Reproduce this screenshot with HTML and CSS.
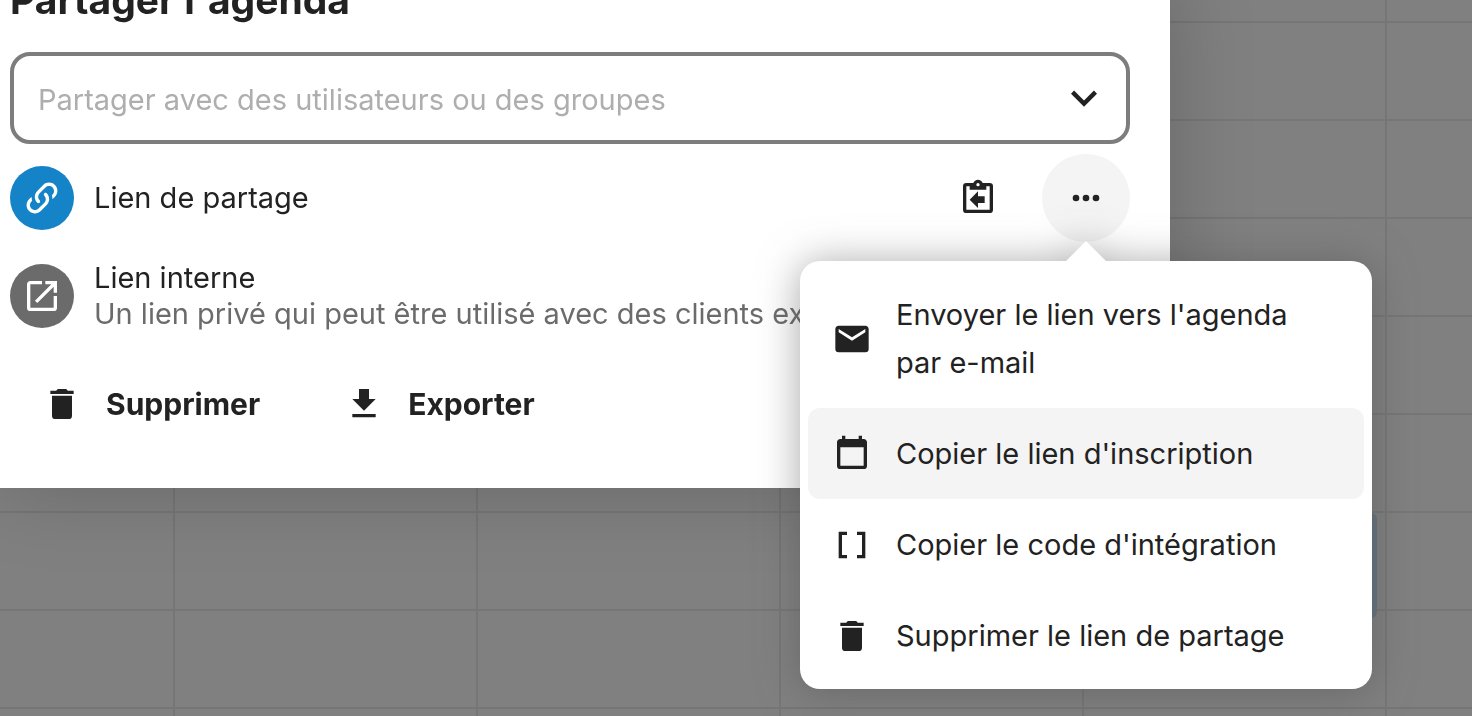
FILE: index.html
```html
<!DOCTYPE html>
<html lang="fr">
<head>
    <meta charset="UTF-8">
    <meta name="viewport" content="width=device-width, initial-scale=1.0">
    <title>Partager l'agenda</title>
    <link rel="stylesheet" href="styles.css">
</head>
<body>
    <div class="calendar">
        <div class="event"></div>
    </div>

    <main class="modal">
        <h2 class="modal-title">Partager l'agenda</h2>

        <div class="share-search">
            <input type="text" class="share-input" placeholder="Partager avec des utilisateurs ou des groupes" aria-label="Partager avec des utilisateurs ou des groupes">
            <button type="button" class="search-toggle" aria-label="Ouvrir la liste">
                <svg class="icon-large" viewBox="0 0 24 24"><path d="M7.41,8.58L12,13.17L16.59,8.58L18,10L12,16L6,10L7.41,8.58Z"/></svg>
            </button>
        </div>

        <ul class="share-list">
            <li class="share-row">
                <span class="avatar avatar-public">
                    <svg class="icon" viewBox="0 0 24 24"><path d="M10.59,13.41C11,13.8 11,14.44 10.59,14.83C10.2,15.22 9.56,15.22 9.17,14.83C7.22,12.88 7.22,9.71 9.17,7.76V7.76L12.71,4.22C14.66,2.27 17.83,2.27 19.78,4.22C21.73,6.17 21.73,9.34 19.78,11.29L18.29,12.78C18.3,11.96 18.17,11.14 17.89,10.36L18.36,9.88C19.54,8.71 19.54,6.81 18.36,5.64C17.19,4.46 15.29,4.46 14.12,5.64L10.59,9.17C9.41,10.34 9.41,12.24 10.59,13.41M13.41,9.17C13.8,8.78 14.44,8.78 14.83,9.17C16.78,11.12 16.78,14.29 14.83,16.24V16.24L11.29,19.78C9.34,21.73 6.17,21.73 4.22,19.78C2.27,17.83 2.27,14.66 4.22,12.71L5.71,11.22C5.7,12.04 5.83,12.86 6.11,13.65L5.64,14.12C4.46,15.29 4.46,17.19 5.64,18.36C6.81,19.54 8.71,19.54 9.88,18.36L13.41,14.83C14.59,13.66 14.59,11.76 13.41,10.59C13,10.2 13,9.56 13.41,9.17Z"/></svg>
                </span>
                <p class="share-label">Lien de partage</p>
                <button type="button" class="round-button" aria-label="Copier le lien">
                    <svg class="icon" viewBox="0 0 24 24"><path fill-rule="evenodd" d="M19,3H14.82C14.4,1.84 13.3,1 12,1C10.7,1 9.6,1.84 9.18,3H5A2,2 0 0,0 3,5V19A2,2 0 0,0 5,21H19A2,2 0 0,0 21,19V5A2,2 0 0,0 19,3M12,3A1,1 0 0,1 13,4A1,1 0 0,1 12,5A1,1 0 0,1 11,4A1,1 0 0,1 12,3M7,7H17V5H19V19H5V5H7V7M12,8L7,13L12,18V15H16V11H12V8Z"/></svg>
                </button>
                <div class="actions">
                    <button type="button" class="round-button open" aria-label="Actions" aria-expanded="true">
                        <svg class="icon" viewBox="0 0 24 24"><path d="M16,12A2,2 0 0,1 18,10A2,2 0 0,1 20,12A2,2 0 0,1 18,14A2,2 0 0,1 16,12M10,12A2,2 0 0,1 12,10A2,2 0 0,1 14,12A2,2 0 0,1 12,14A2,2 0 0,1 10,12M4,12A2,2 0 0,1 6,10A2,2 0 0,1 8,12A2,2 0 0,1 6,14A2,2 0 0,1 4,12Z"/></svg>
                    </button>

                    <div class="menu">
                        <button type="button" class="menu-item">
                            <svg class="icon" viewBox="0 0 24 24"><path d="M20,8L12,13L4,8V6L12,11L20,6M20,4H4C2.89,4 2,4.89 2,6V18A2,2 0 0,0 4,20H20A2,2 0 0,0 22,18V6C22,4.89 21.1,4 20,4Z"/></svg>
                            <span>Envoyer le lien vers l'agenda par e-mail</span>
                        </button>
                        <button type="button" class="menu-item active">
                            <svg class="icon" viewBox="0 0 24 24"><path d="M19,19H5V8H19M16,1V3H8V1H6V3H5C3.89,3 3,3.89 3,5V19A2,2 0 0,0 5,21H19A2,2 0 0,0 21,19V5C21,3.89 20.1,3 19,3H18V1"/></svg>
                            <span>Copier le lien d'inscription</span>
                        </button>
                        <button type="button" class="menu-item">
                            <svg class="icon" viewBox="0 0 24 24"><path d="M15,4V6H18V18H15V20H20V4M4,4V20H9V18H6V6H9V4H4Z"/></svg>
                            <span>Copier le code d'intégration</span>
                        </button>
                        <button type="button" class="menu-item">
                            <svg class="icon" viewBox="0 0 24 24"><path d="M19,4H15.5L14.5,3H9.5L8.5,4H5V6H19M6,19A2,2 0 0,0 8,21H16A2,2 0 0,0 18,19V7H6V19Z"/></svg>
                            <span>Supprimer le lien de partage</span>
                        </button>
                    </div>
                </div>
            </li>
            <li class="share-row">
                <span class="avatar avatar-internal">
                    <svg class="icon" viewBox="0 0 24 24"><path d="M14,3V5H17.59L7.76,14.83L9.17,16.24L19,6.41V10H21V3M19,19H5V5H12V3H5C3.89,3 3,3.9 3,5V19A2,2 0 0,0 5,21H19A2,2 0 0,0 21,19V12H19V19Z"/></svg>
                </span>
                <p class="share-label">
                    Lien interne
                    <span class="share-detail">Un lien privé qui peut être utilisé avec des clients externes</span>
                </p>
            </li>
        </ul>

        <div class="modal-buttons">
            <button type="button" class="text-button">
                <svg class="icon" viewBox="0 0 24 24"><path d="M19,4H15.5L14.5,3H9.5L8.5,4H5V6H19M6,19A2,2 0 0,0 8,21H16A2,2 0 0,0 18,19V7H6V19Z"/></svg>
                <span>Supprimer</span>
            </button>
            <button type="button" class="text-button">
                <svg class="icon" viewBox="0 0 24 24"><path d="M5,20H19V18H5M19,9H15V3H9V9H5L12,16L19,9Z"/></svg>
                <span>Exporter</span>
            </button>
        </div>
    </main>
</body>
</html>
```
FILE: styles.css
```css
body {
    font-family: Inter, "Liberation Sans", sans-serif;
    font-size: 29px;
    line-height: 36px;
    color: #222;
    margin: 0;
    min-height: 100vh;
    overflow: hidden;
}

button,
input {
    font: inherit;
    color: inherit;
    border: none;
    background: none;
    padding: 0;
    margin: 0;
}

button {
    cursor: pointer;
}

.icon,
.icon-large {
    display: block;
    flex-shrink: 0;
    width: 40px;
    height: 40px;
    fill: currentColor;
}

.icon-large {
    width: 52px;
    height: 52px;
}

/* dimmed week grid behind the dialog */
.calendar {
    position: fixed;
    inset: 0;
    z-index: -1;
    background-color: #808080;
    background-image:
        linear-gradient(to right, #767676 2px, transparent 2px),
        linear-gradient(#767676 2px, transparent 2px);
    background-size: 303px 98px;
    background-position: 173px 21px;
}

.event {
    position: absolute;
    top: 513px;
    left: 1084px;
    width: 293px;
    height: 105px;
    border-radius: 6px;
    background-color: #63737f;
}

.modal {
    box-sizing: border-box;
    width: calc(100% - 302px);
    padding: 0 40px 40px 10px;
    background-color: #fff;
    box-shadow: 0 0 80px rgba(0, 0, 0, 0.2);
}

/* the dialog is scrolled, its title is partly out of view */
.modal-title {
    margin: -24px 0 28px;
    font-size: 39px;
    line-height: 48px;
    font-weight: 700;
}

.share-search {
    display: flex;
    align-items: center;
    height: 84px;
    padding: 0 16px 0 24px;
    border: 4px solid #7d7d7d;
    border-radius: 20px;
}

.share-input {
    flex: 1;
    min-width: 0;
    padding-top: 4px;
    outline: none;
}

.share-input::placeholder {
    color: #aeaeae;
    opacity: 1;
}

.share-list {
    list-style: none;
    margin: 0;
    padding: 10px 0 0;
}

.share-row {
    display: flex;
    align-items: center;
    min-height: 88px;
    margin-bottom: 10px;
}

.avatar {
    display: flex;
    align-items: center;
    justify-content: center;
    flex-shrink: 0;
    width: 64px;
    height: 64px;
    border-radius: 50%;
    color: #fff;
}

.avatar-public {
    background-color: #1583c7;
}

.avatar-internal {
    background-color: #6b6b6b;
}

.share-label {
    flex: 1;
    margin: 0 0 0 20px;
}

.share-detail {
    display: block;
    color: #6b6b6b;
    white-space: nowrap;
}

.round-button {
    display: flex;
    align-items: center;
    justify-content: center;
    width: 88px;
    height: 88px;
    border-radius: 50%;
}

.round-button.open {
    background-color: #f4f4f4;
}

.actions {
    position: relative;
    margin-left: 20px;
}

.menu {
    position: absolute;
    top: calc(100% + 19px);
    right: -242px;
    z-index: 10;
    box-sizing: border-box;
    width: 572px;
    padding: 8px;
    border-radius: 20px;
    background-color: #fff;
    filter: drop-shadow(0 2px 20px rgba(77, 77, 77, 0.5));
}

.menu::before {
    content: "";
    position: absolute;
    bottom: 100%;
    right: 266px;
    border: 20px solid transparent;
    border-top: none;
    border-bottom-color: #fff;
}

.menu-item {
    display: flex;
    align-items: center;
    gap: 24px;
    width: 100%;
    padding: 22px 24px 21px;
    border-radius: 12px;
    line-height: 48px;
    text-align: left;
}

.menu-item.active,
.menu-item:hover {
    background-color: #f4f4f4;
}

.modal-buttons {
    display: flex;
    gap: 20px;
    padding-top: 10px;
}

.text-button {
    display: flex;
    align-items: center;
    gap: 24px;
    height: 88px;
    padding: 0 32px;
    font-size: 30px;
    font-weight: 700;
}
```
